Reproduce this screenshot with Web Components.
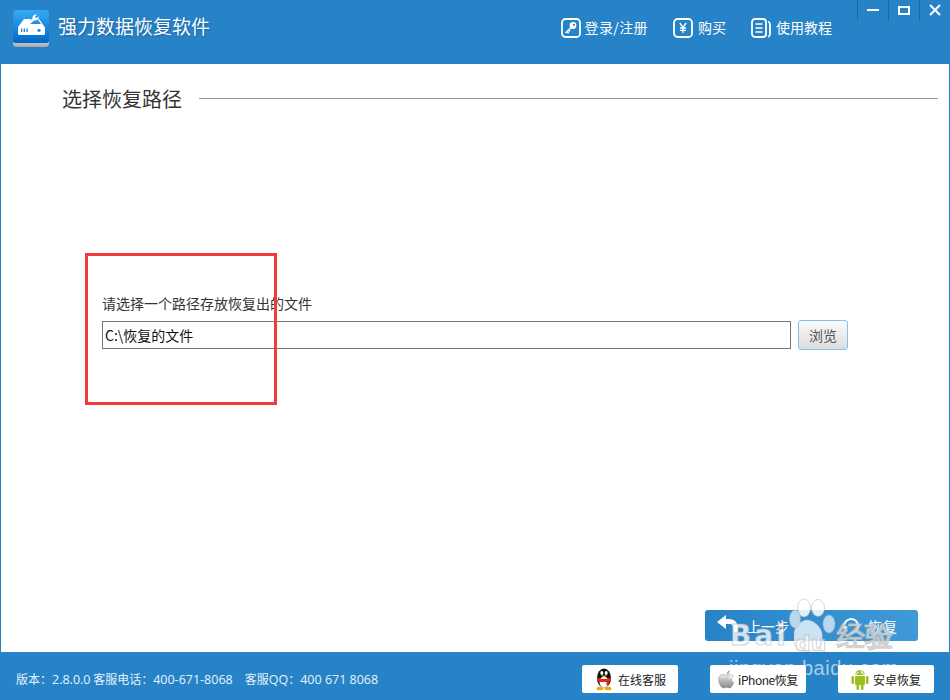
<!DOCTYPE html>
<html lang="zh">
<head>
<meta charset="utf-8">
<title>强力数据恢复软件</title>
<style>
html,body{margin:0;padding:0;height:100%;}
body{font-family:"Noto Sans CJK SC","Liberation Sans",sans-serif;overflow:hidden;}
</style>
</head>
<body>
<recovery-app></recovery-app>
<script>
const FONT='"Noto Sans CJK SC","Liberation Sans",sans-serif';
function def(name,html,init){
  customElements.define(name,class extends HTMLElement{
    constructor(){super();this.attachShadow({mode:'open'}).innerHTML=html;}
    connectedCallback(){if(init)init(this);}
  });
}
const ICONS={
 key:`<svg width="20" height="20" viewBox="0 0 20 20" fill="none" stroke="#fff"><rect x="1" y="1" width="18" height="18" rx="3.5" stroke-width="1.8"/><circle cx="12" cy="7.5" r="3.4" fill="#fff" stroke="none"/><circle cx="12.8" cy="6.800" r="1.100" fill="#2783c7" stroke="none"/><path d="M10 9.500L4.500 15M6 13.500l1.600 1.600M7.600 12l1.400 1.400" stroke-width="1.500"/></svg>`,
 yen:`<svg width="20" height="20" viewBox="0 0 20 20" fill="none" stroke="#fff"><rect x="1" y="1" width="18" height="18" rx="3.5" stroke-width="1.8"/><path d="M6.800 5l3.200 4.500L13.200 5M10 9.500V15M7 10h6M7 12.300h6" stroke-width="1.300"/></svg>`,
 book:`<svg width="20" height="20" viewBox="0 0 20 20" fill="none" stroke="#fff"><rect x="1" y="1" width="14" height="18" rx="3" stroke-width="1.800"/><path d="M4.500 6h7M4.500 10h7M4.500 14h7" stroke-width="1.300"/><path d="M17 3.500c1.400.6 2 1.600 2 3V16c0 1.600-.8 2.600-2 3" stroke-width="1.800"/></svg>`
};
def('nav-link',`<style>
:host{display:inline-flex;align-items:flex-start;gap:4px;color:#fff;font-size:14px;line-height:20px;white-space:nowrap;}
:host([wide]){letter-spacing:.4px;}
:host([roomy]){gap:5px;}
.i{display:flex;width:20px;height:20px;}
.t{margin-top:-1px;}
</style><span class="i"></span><span class="t"><slot></slot></span>`,el=>{
  el.shadowRoot.querySelector('.i').innerHTML=ICONS[el.getAttribute('icon')];
});
def('win-controls',`<style>
:host{display:flex;align-items:flex-start;height:20px;}
span{box-sizing:border-box;display:flex;align-items:center;justify-content:center;width:31px;height:20px;border-left:1px solid #1a689f;}
</style>
<span><svg width="12" height="20"><rect y="9" width="12" height="2" fill="#fff"/></svg></span>
<span><svg width="12" height="20"><rect x="1" y="7" width="10" height="7" fill="none" stroke="#fff" stroke-width="2"/></svg></span>
<span><svg width="12" height="20"><path d="M1 5l10 10M11 5L1 15" stroke="#fff" stroke-width="2"/></svg></span>`);
def('app-header',`<style>
:host{display:flex;height:64px;background:#2783c7;color:#fff;box-sizing:border-box;position:relative;font-family:${FONT};}
.logo{margin:10px 0 0 13px;width:36px;height:37px;flex:none;}
h1{margin:0 0 0 9px;padding-top:11px;font-weight:400;font-size:19px;line-height:30px;text-shadow:1px 1px 2px rgba(0,40,80,.35);}
nav{margin-left:auto;margin-right:118px;display:flex;align-items:flex-start;gap:25px;padding-top:18px;height:20px;}
win-controls{position:absolute;right:0;top:0;}
</style>
<svg class="logo" viewBox="0 0 36 37">
<defs><linearGradient id="g" x1="0" y1="0" x2="0" y2="1"><stop offset="0" stop-color="#35aaf5"/><stop offset="1" stop-color="#0068c8"/></linearGradient>
<linearGradient id="b" x1="0" y1="0" x2="0" y2="1"><stop offset="0" stop-color="#f2f2f2"/><stop offset="1" stop-color="#a8a8a8"/></linearGradient></defs>
<rect y="26" width="36" height="11" rx="4" fill="url(#b)"/>
<path d="M4 0h28a4 4 0 0 1 4 4v27a2 2 0 0 1-2 2H2a2 2 0 0 1-2-2V4a4 4 0 0 1 4-4z" fill="url(#g)"/>
<path d="M11 9h7l-3 5h13l-3.500-5h1.500l6 8.500V23.500a1.500 1.500 0 0 1-1.500 1.500H6.500A1.500 1.500 0 0 1 5 23.500V17z" fill="#fff"/>
<path d="M12 14.500l7.500-6c-.5-2.500 1.500-4.500 4.500-4l-2 2.200 1.500 1.600 2.300-2c.4 3-2 4.700-4.300 4l-5 4.200z" fill="#fff"/>
<path d="M8 18.500h1.300v3.500H8zM10.700 18.500H12v3.500h-1.300zM13.400 18.500h1.300v3.500h-1.300z" fill="#1a86dc"/><circle cx="26" cy="20.300" r="1.600" fill="#1a86dc"/>
</svg>
<h1>强力数据恢复软件</h1>
<nav><nav-link icon="key" wide>登录/注册</nav-link><nav-link icon="yen" roomy>购买</nav-link><nav-link icon="book" roomy>使用教程</nav-link></nav>
<win-controls></win-controls>`);
def('section-title',`<style>
:host{display:flex;align-items:center;gap:17px;color:#333;font-size:20px;line-height:30px;padding:0 11px 0 61px;}
i{flex:1;height:1px;background:#999;margin-top:-2px;}
</style><span><slot></slot></span><i></i>`);
def('path-form',`<style>
:host{display:block;padding:0 0 0 101px;font-size:14px;color:#333;}
label{display:block;line-height:18px;margin-bottom:8px;}
.row{display:flex;align-items:center;gap:7px;}
.in{box-sizing:border-box;width:689px;height:28px;border:1px solid #777;line-height:26px;padding-left:2px;color:#111;white-space:nowrap;}
.btn{box-sizing:border-box;width:50px;height:30px;border:1px solid #7cc4f5;border-radius:3px;background:linear-gradient(#fbfbfb,#dcdcdc);color:#555;display:flex;align-items:center;justify-content:center;}
</style><label>请选择一个路径存放恢复出的文件</label>
<div class="row"><div class="in">C:\\恢复的文件</div><div class="btn">浏览</div></div>`);
def('step-bar',`<style>
:host{display:flex;margin:0 31px 11px auto;width:213px;height:31px;border-radius:3px;background:linear-gradient(90deg,#2783c7,#409ad8);color:#fff;font-size:14px;align-items:center;}
.a{display:flex;align-items:center;gap:8px;}
#prev{margin-left:12px;}
#next{margin-left:auto;margin-right:20px;gap:8px;letter-spacing:1px;}
</style>
<div class="a" id="prev"><svg width="22" height="24" viewBox="0 0 22 24"><path d="M0 8l9-7v4h3c6 0 9 4 9 10v3h-4v-3c0-3-2-5-5-5H9v5z" fill="#fff"/></svg><span>上一步</span></div>
<div class="a" id="next"><svg width="18" height="18" viewBox="0 0 18 18" fill="none" stroke="#fff" stroke-width="2"><path d="M2.500 11A7 7 0 1 1 9 16"/><path d="M0 9.500h6l-3 4z" fill="#fff" stroke="none"/></svg><span>恢复</span></div>`);
def('foot-button',`<style>
:host{display:flex;align-items:center;justify-content:center;gap:4px;width:96px;height:28px;background:#fff;border-radius:2px;color:#222;font-size:12px;white-space:nowrap;}
:host([tight]){letter-spacing:-.45px;gap:3px;}
svg{flex:none;display:block}
</style><span id="i" style="display:flex"></span><slot></slot>`,el=>{
  const I={
   qq:`<svg width="20" height="24" viewBox="0 0 20 24"><ellipse cx="10" cy="11" rx="7" ry="9.500" fill="#111"/><ellipse cx="10" cy="15" rx="4.500" ry="5.500" fill="#fff"/><ellipse cx="7.800" cy="6" rx="1.500" ry="2" fill="#fff"/><ellipse cx="12.200" cy="6" rx="1.500" ry="2" fill="#fff"/><path d="M7 8.500h6l-3 2z" fill="#f5b400"/><path d="M3.500 10.500c4 2 9 2 13 0l.8 3c-1 .8-1.800 1-2.800 1.200V18h-2v-3H6c-1.500-.2-2.500-1-3-1.500z" fill="#e6231d"/><ellipse cx="6" cy="21.500" rx="3.500" ry="1.800" fill="#f5a800"/><ellipse cx="14" cy="21.500" rx="3.500" ry="1.800" fill="#f5a800"/></svg>`,
   apple:`<svg width="17" height="21" viewBox="0 0 20 22"><defs><linearGradient id="a" x1="0" y1="0" x2="0" y2="1"><stop offset="0" stop-color="#eee"/><stop offset=".5" stop-color="#b5b5b5"/><stop offset="1" stop-color="#888"/></linearGradient></defs><path d="M14 5c-2 0-3 1-4.300 1C8.500 6 7.500 5 5.800 5 3 5 .8 7.500.8 11c0 4.500 3 10 5.500 10 1.400 0 2-1 3.700-1s2.200 1 3.700 1c1.800 0 3.800-3.500 4.800-6.500-3.500-1.500-3.500-6.500-.4-8C17 5.500 15.500 5 14 5z" fill="url(#a)" stroke="#888" stroke-width=".6"/><path d="M10 5c0-2.500 2-4.500 4-5 .2 2.500-1.500 4.500-4 5z" fill="#aaa"/></svg>`,
   android:`<svg width="18" height="22" viewBox="0 0 18 22" fill="#9bbf1f"><path d="M4 7a5 5 0 0 1 10 0z"/><rect x="4" y="8" width="10" height="9" rx="1"/><rect x=".5" y="8" width="2.600" height="8" rx="1.300"/><rect x="14.900" y="8" width="2.600" height="8" rx="1.300"/><rect x="5.500" y="16" width="2.600" height="6" rx="1.300"/><rect x="9.900" y="16" width="2.600" height="6" rx="1.300"/><circle cx="7" cy="4.500" r=".7" fill="#fff"/><circle cx="11" cy="4.500" r=".7" fill="#fff"/></svg>`
  };
  el.shadowRoot.getElementById('i').innerHTML=I[el.getAttribute('icon')];
});
def('app-footer',`<style>
:host{display:flex;align-items:center;height:48px;background:#2783c7;color:#e6f2fb;font-size:12px;padding:0 16px;box-sizing:border-box;}
.b{margin-left:auto;display:flex;gap:32px;padding-top:6px;}
.v{white-space:nowrap;padding-top:6px;}
.q{margin-left:12px;}
b{font:12.5px "Open Sans",sans-serif;}
</style><span class="v">版本：<b>2.8.0.0</b> 客服电话：<b>400-671-8068</b><span class="q">客服<b>QQ</b>：<b>400 671 8068</b></span></span>
<div class="b"><foot-button icon="qq">在线客服</foot-button><foot-button icon="apple" tight>iPhone恢复</foot-button><foot-button icon="android">安卓恢复</foot-button></div>`);
def('baidu-mark',`<style>
:host{display:block;position:absolute;left:725px;top:595px;width:180px;height:95px;pointer-events:none;color:rgba(255,255,255,.78);font-family:"DejaVu Sans",sans-serif;}
svg{position:absolute;left:60px;top:0;}
.t{position:absolute;font-weight:700;font-size:28px;line-height:30px;-webkit-text-stroke:1px rgba(165,165,165,.5);}
.j{position:absolute;left:4px;top:61px;font-family:"Liberation Sans",sans-serif;font-size:20px;line-height:24px;letter-spacing:.5px;color:rgba(255,255,255,.62);white-space:nowrap;}
</style>
<svg width="60" height="60" viewBox="0 0 60 60">
<path d="M9 38c0-6 7-13 13-13 7 0 14 7 15 13 1 7 1 18-14 18S9 48 9 38z" fill="rgba(255,255,255,.75)" stroke="rgba(170,170,170,.35)"/>
<g stroke="rgba(175,175,175,.5)"><ellipse cx="19" cy="13" rx="6.500" ry="9" fill="rgba(255,255,255,.85)"/><ellipse cx="33" cy="13" rx="6.500" ry="8.500" fill="rgba(255,255,255,.85)"/><ellipse cx="10" cy="24" rx="5.500" ry="9" fill="rgba(205,228,245,.85)"/><ellipse cx="44" cy="29" rx="6" ry="9" fill="rgba(205,228,245,.85)"/></g></svg>
<span class="t" style="left:5px;top:26px;letter-spacing:3px">Bai</span>
<span class="t" style="left:70px;top:34px;font-size:22px;color:rgba(255,255,255,.5)">du</span>
<span class="t" style="left:112px;top:27px;font-size:28px;font-family:${FONT};font-weight:400">经验</span>
<span class="j">jingyan.baidu.com</span>`);
def('red-frame',`<style>
:host{display:block;position:absolute;left:85px;top:253px;width:192px;height:152px;box-sizing:border-box;border:3px solid #f33a3a;pointer-events:none;}
</style>`);
def('recovery-app',`<style>
:host{display:flex;flex-direction:column;width:950px;height:700px;position:relative;background:#fff;font-family:${FONT};overflow:hidden;}
main{flex:1;display:flex;flex-direction:column;border:solid #2783c7;border-width:0 1px;min-height:0;padding-top:20px;}
path-form{margin-top:180px;}
step-bar{margin-top:auto;}
</style>
<app-header></app-header>
<main><section-title>选择恢复路径</section-title><path-form></path-form><step-bar></step-bar></main>
<app-footer></app-footer>
<red-frame></red-frame>
<baidu-mark></baidu-mark>`);
</script>
</body>
</html>
